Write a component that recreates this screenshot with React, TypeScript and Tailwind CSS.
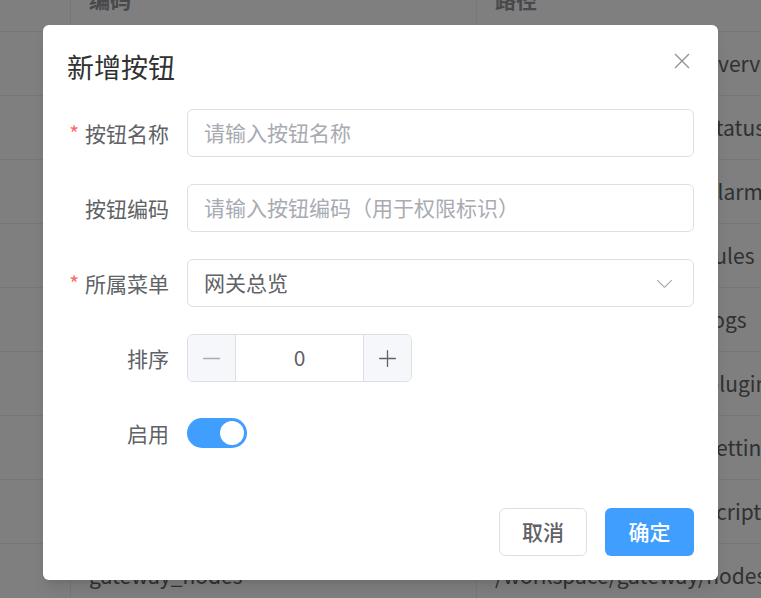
const rows = [
  { code: "gateway_overview", path: "/workspace/gateway/overview" },
  { code: "gateway_status", path: "/workspace/gateway/status" },
  { code: "gateway_alarm", path: "/workspace/gateway/alarm" },
  { code: "gateway_rules", path: "/workspace/gateway/rules" },
  { code: "gateway_logs", path: "/workspace/gateway/logs" },
  { code: "gateway_plugin", path: "/workspace/gateway/plugin" },
  { code: "gateway_setting", path: "/workspace/gateway/setting" },
  { code: "gateway_script", path: "/workspace/gateway/script" },
  { code: "gateway_nodes", path: "/workspace/gateway/nodes" },
];

function FormLabel({ text, required }: { text: string; required?: boolean }) {
  return (
    <label className="w-[120px] shrink-0 pr-[18px] text-right text-[21px] leading-[48px] text-[#606266]">
      {required && <span className="mr-[6px] text-[#f56c6c]">*</span>}
      {text}
    </label>
  );
}

export default function App() {
  return (
    <div
      className="relative h-[598px] w-[761px] overflow-hidden bg-white"
      style={{ fontFamily: '"Noto Sans CJK SC", "Noto Sans", sans-serif' }}
    >
      {/* Table behind the dialog */}
      <div className="-mt-[31px] text-[21px]">
        <div className="flex h-[63px] items-center border-b border-[#ebeef5] font-bold text-[#909399]">
          <div className="h-full w-[71px] shrink-0 border-r border-[#ebeef5]"></div>
          <div className="flex h-full w-[406px] shrink-0 items-center border-r border-[#ebeef5] px-[18px]">编码</div>
          <div className="flex h-full flex-1 items-center px-[18px]">路径</div>
        </div>
        {rows.map((row) => (
          <div key={row.code} className="flex h-[64px] items-center border-b border-[#ebeef5] text-[#606266]">
            <div className="h-full w-[71px] shrink-0 border-r border-[#ebeef5]"></div>
            <div className="flex h-full w-[406px] shrink-0 items-center border-r border-[#ebeef5] px-[18px]">{row.code}</div>
            <div className="flex h-full flex-1 items-center whitespace-nowrap px-[18px]">{row.path}</div>
          </div>
        ))}
      </div>

      {/* Overlay + dialog */}
      <div className="absolute inset-0 flex items-start justify-center bg-black/50">
        <div className="relative mt-[25px] w-[675px] rounded-[6px] bg-white p-[24px] shadow-lg">
          <div className="pb-[24px]">
            <span className="text-[27px] leading-[36px] text-[#303133]">新增按钮</span>
          </div>
          <button className="absolute right-0 top-0 flex h-[72px] w-[72px] items-center justify-center text-[#909399]">
            <svg width="16" height="16" viewBox="0 0 16 16" fill="none" stroke="currentColor" strokeWidth="1.4">
              <path d="M1 1L15 15M15 1L1 15" />
            </svg>
          </button>

          {/* Form */}
          <div>
            <div className="mb-[27px] flex h-[48px]">
              <FormLabel text="按钮名称" required />
              <div className="flex flex-1 items-center rounded-[6px] border border-[#dcdfe6] px-[16px] text-[21px] text-[#a8abb2]">
                请输入按钮名称
              </div>
            </div>
            <div className="mb-[27px] flex h-[48px]">
              <FormLabel text="按钮编码" />
              <div className="flex flex-1 items-center rounded-[6px] border border-[#dcdfe6] px-[16px] text-[21px] text-[#a8abb2]">
                请输入按钮编码（用于权限标识）
              </div>
            </div>
            <div className="mb-[27px] flex h-[48px]">
              <FormLabel text="所属菜单" required />
              <div className="flex flex-1 items-center justify-between rounded-[6px] border border-[#dcdfe6] pl-[16px] pr-[18px] text-[21px] text-[#606266]">
                <span>网关总览</span>
                <svg width="21" height="21" viewBox="0 0 1024 1024" fill="#a8abb2">
                  <path d="M831.872 340.864 512 652.672 192.128 340.864a30.592 30.592 0 0 0-42.752 0 29.12 29.12 0 0 0 0 41.6L489.664 714.24a32 32 0 0 0 44.672 0l340.288-331.712a29.12 29.12 0 0 0 0-41.728 30.592 30.592 0 0 0-42.752 0z" />
                </svg>
              </div>
            </div>
            <div className="mb-[27px] flex h-[48px]">
              <FormLabel text="排序" />
              <div className="flex h-[48px] w-[225px] overflow-hidden rounded-[6px] border border-[#dcdfe6]">
                <div className="flex w-[48px] items-center justify-center border-r border-[#dcdfe6] bg-[#f5f7fa]">
                  <svg width="21" height="21" viewBox="0 0 1024 1024" fill="#a8abb2">
                    <path d="M128 544h768a32 32 0 1 0 0-64H128a32 32 0 0 0 0 64z" />
                  </svg>
                </div>
                <div className="flex flex-1 items-center justify-center text-[21px] text-[#606266]">0</div>
                <div className="flex w-[48px] items-center justify-center border-l border-[#dcdfe6] bg-[#f5f7fa]">
                  <svg width="21" height="21" viewBox="0 0 1024 1024" fill="#606266">
                    <path d="M480 480V128a32 32 0 0 1 64 0v352h352a32 32 0 1 1 0 64H544v352a32 32 0 1 1-64 0V544H128a32 32 0 0 1 0-64h352z" />
                  </svg>
                </div>
              </div>
            </div>
            <div className="mb-[27px] flex h-[48px]">
              <FormLabel text="启用" />
              <div className="flex items-center">
                <div className="flex h-[30px] w-[60px] items-center justify-end rounded-full bg-[#409eff] px-[3px]">
                  <span className="h-[24px] w-[24px] rounded-full bg-white"></span>
                </div>
              </div>
            </div>
          </div>

          {/* Footer */}
          <div className="flex justify-end gap-[18px] pt-[24px]">
            <button className="h-[48px] w-[88px] rounded-[6px] border border-[#dcdfe6] bg-white text-[21px] font-medium text-[#606266]">
              取消
            </button>
            <button className="h-[48px] w-[89px] rounded-[6px] bg-[#409eff] text-[21px] font-medium text-white">
              确定
            </button>
          </div>
        </div>
      </div>
    </div>
  );
}
